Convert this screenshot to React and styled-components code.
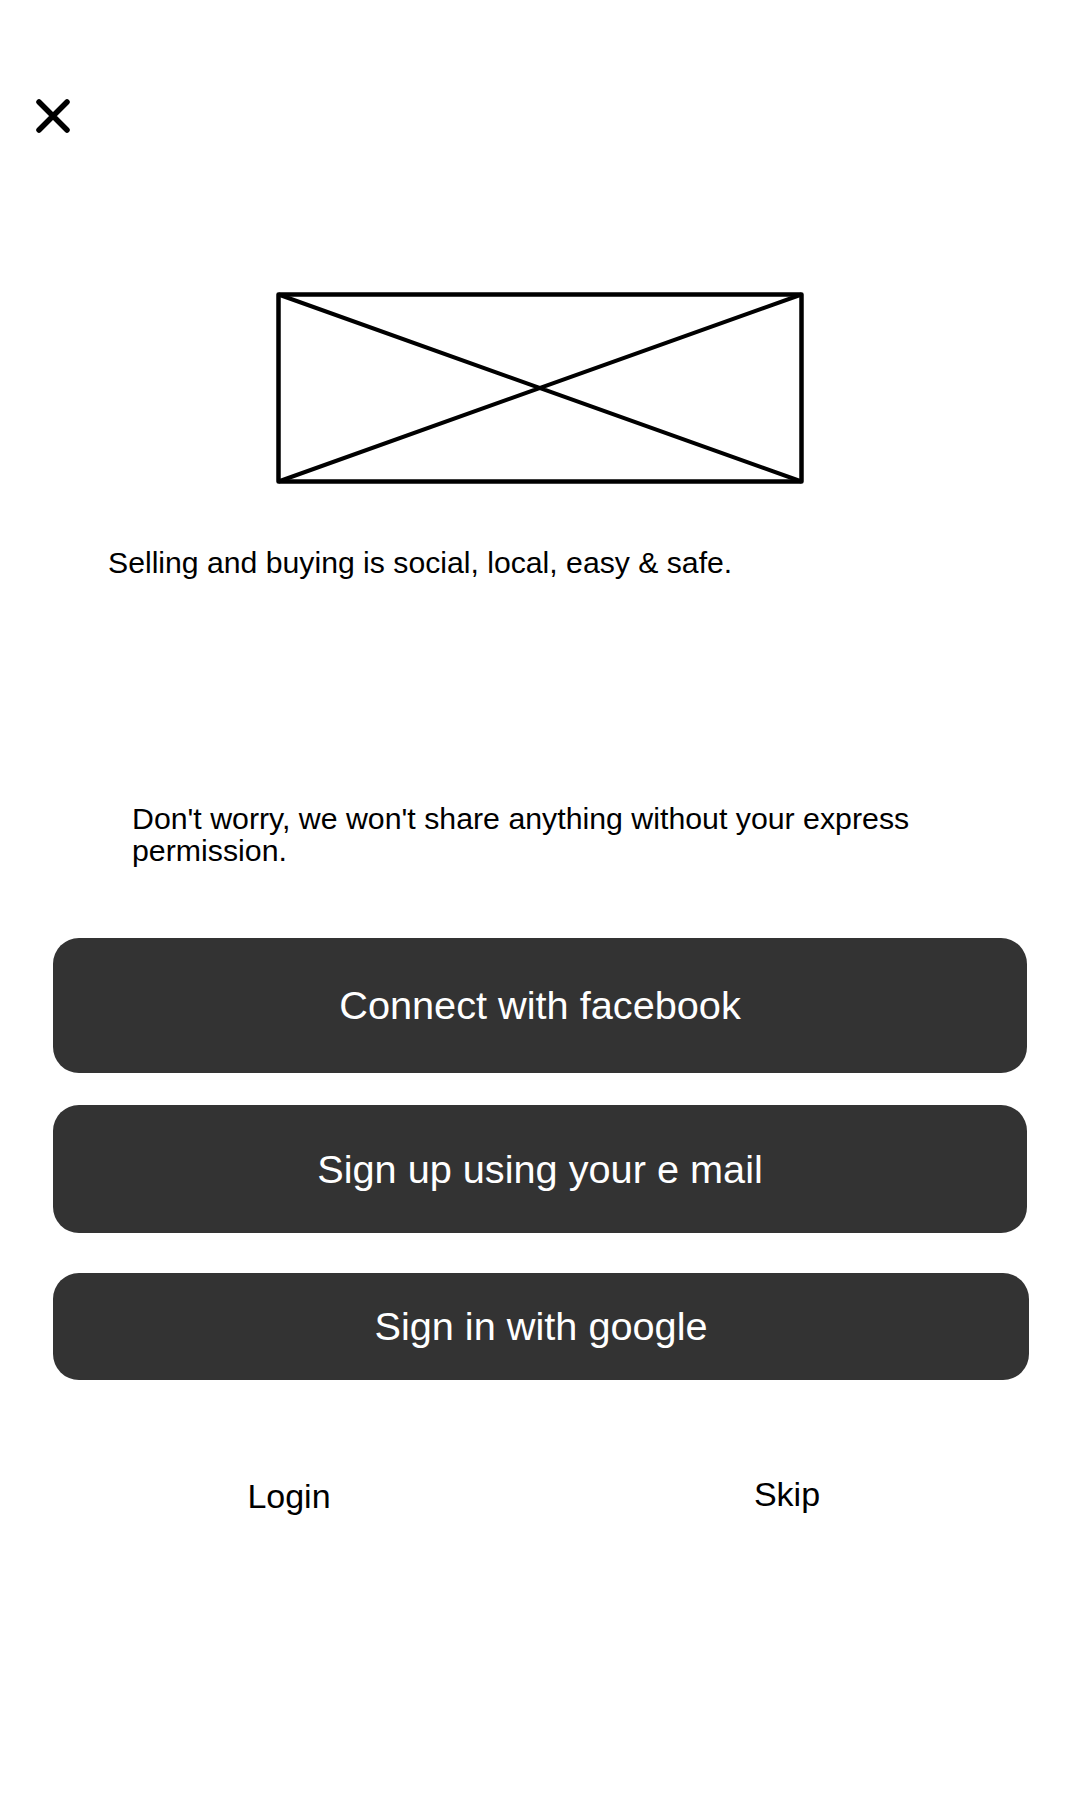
import React from "react";
import styled, { createGlobalStyle } from "styled-components";

const GlobalStyle = createGlobalStyle`
	body {
		margin: 0;
		background: #ffffff;
		font-family: "Liberation Sans", Arial, sans-serif;
		color: #000000;
	}
`;

const Screen = styled.div`
	width: 1080px;
	min-height: 1800px;
	display: flex;
	flex-direction: column;
	background: #ffffff;
`;

const TopBar = styled.div`
	display: flex;
	padding: 97px 0 0 34px;
`;

const CloseButton = styled.button`
	width: 38px;
	height: 38px;
	padding: 0;
	border: none;
	background: none;
	cursor: pointer;
	display: flex;
`;

const Placeholder = styled.div`
	align-self: center;
	width: 528px;
	height: 192px;
	margin-top: 157px;
	display: flex;
`;

const Tagline = styled.p`
	margin: 62px 0 0 108px;
	font-size: 30.2px;
	line-height: 34px;
`;

const Notice = styled.p`
	margin: 223px 0 0 132px;
	max-width: 820px;
	font-size: 30.3px;
	line-height: 32px;
`;

const Actions = styled.div`
	display: flex;
	flex-direction: column;
	align-items: flex-start;
	margin-top: 71px;
	padding: 0 51px 0 53px;
`;

const ActionButton = styled.button`
	width: ${(props) => props.width}px;
	height: ${(props) => props.height}px;
	margin-top: ${(props) => props.gap || 0}px;
	border: none;
	border-radius: 26px;
	background-color: #333333;
	color: #ffffff;
	font-family: "Liberation Sans", Arial, sans-serif;
	font-size: 39.7px;
	cursor: pointer;
`;

const FooterRow = styled.div`
	display: grid;
	grid-template-columns: 1fr 1fr;
	margin-top: 96px;
	padding: 0 44px 0 40px;
`;

const FooterLink = styled.a`
	text-align: center;
	font-size: 34px;
	line-height: 40px;
	color: #000000;
	text-decoration: none;
	cursor: pointer;
	position: relative;
	top: ${(props) => props.shift || 0}px;
`;

function CloseIcon() {
	return (
		<svg width="38" height="38" viewBox="0 0 38 38">
			<path
				d="M5 5 L33 33 M33 5 L5 33"
				stroke="#000"
				strokeWidth="5.5"
				strokeLinecap="round"
				fill="none"
			/>
		</svg>
	);
}

function ImagePlaceholder() {
	return (
		<svg width="528" height="192" viewBox="0 0 528 192">
			<g stroke="#000" strokeWidth="4.5" fill="none" strokeLinejoin="round">
				<rect x="2.5" y="2.5" width="523" height="187" />
				<path d="M2.5 2.5 L525.5 189.5 M525.5 2.5 L2.5 189.5" strokeWidth="4" />
			</g>
		</svg>
	);
}

export default function App() {
	return (
		<Screen>
			<GlobalStyle />
			<TopBar>
				<CloseButton aria-label="Close">
					<CloseIcon />
				</CloseButton>
			</TopBar>
			<Placeholder>
				<ImagePlaceholder />
			</Placeholder>
			<Tagline>Selling and buying is social, local, easy &amp; safe.</Tagline>
			<Notice>
				Don't worry, we won't share anything without your express permission.
			</Notice>
			<Actions>
				<ActionButton width={974} height={135}>
					Connect with facebook
				</ActionButton>
				<ActionButton width={974} height={128} gap={32}>
					Sign up using your e mail
				</ActionButton>
				<ActionButton width={976} height={107} gap={40}>
					Sign in with google
				</ActionButton>
			</Actions>
			<FooterRow>
				<FooterLink>Login</FooterLink>
				<FooterLink shift={-2}>Skip</FooterLink>
			</FooterRow>
		</Screen>
	);
}
